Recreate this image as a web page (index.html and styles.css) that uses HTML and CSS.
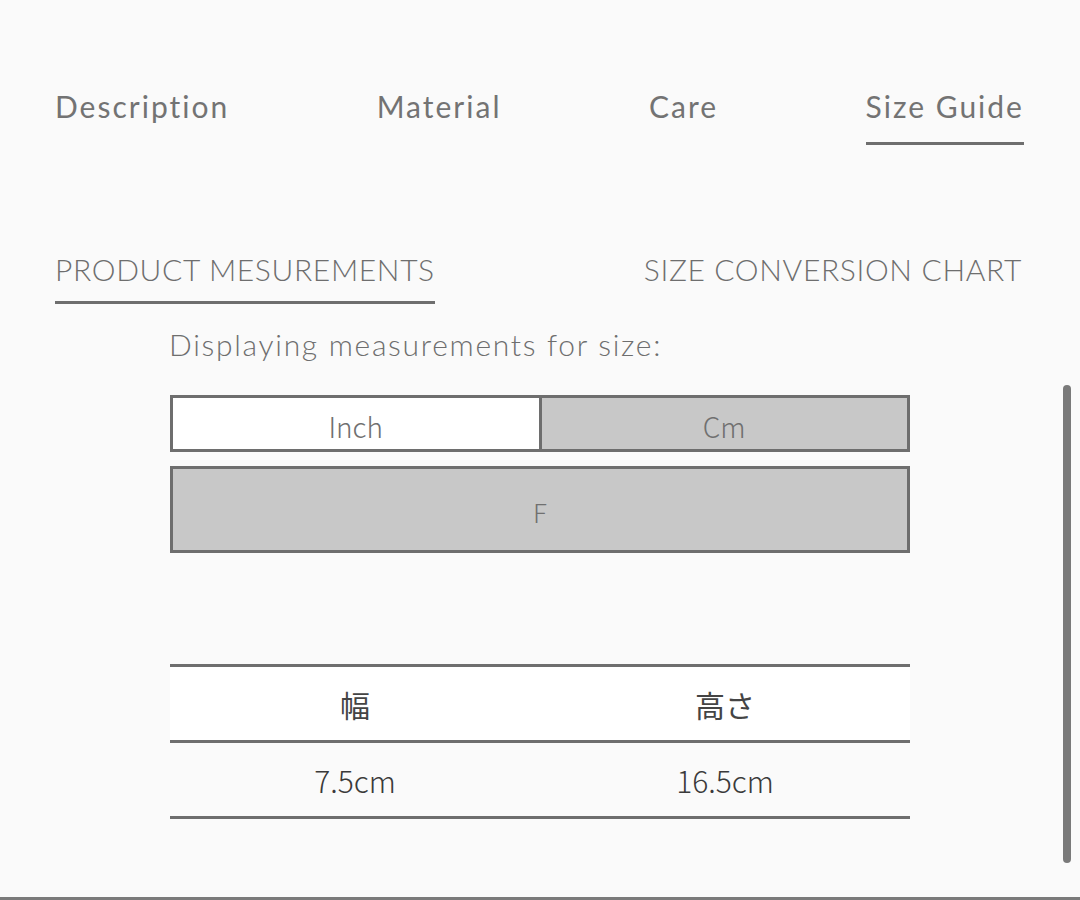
FILE: index.html
```html
<!DOCTYPE html>
<html lang="ja">
<head>
<meta charset="utf-8">
<link rel="stylesheet" href="styles.css">
</head>
<body>
<div class="page">
  <nav class="tabs">
    <div class="tab">Description</div>
    <div class="tab">Material</div>
    <div class="tab">Care</div>
    <div class="tab active">Size Guide</div>
  </nav>
  <div class="subtabs">
    <div class="subtab active">PRODUCT MESUREMENTS</div>
    <div class="subtab">SIZE CONVERSION CHART</div>
  </div>
  <div class="panel">
    <p class="caption">Displaying measurements for size:</p>
    <div class="units">
      <div class="unit selected">Inch</div>
      <div class="unit">Cm</div>
    </div>
    <div class="size">F</div>
    <table class="measure">
      <thead>
        <tr><th>幅</th><th>高さ</th></tr>
      </thead>
      <tbody>
        <tr><td>7.5cm</td><td>16.5cm</td></tr>
      </tbody>
    </table>
  </div>
  <div class="scrollbar"></div>
</div>
</body>
</html>
```
FILE: styles.css
```css
html, body {
  margin: 0;
  padding: 0;
  background: #fafafa;
}
.page {
  position: relative;
  width: 1080px;
  height: 897px;
  border-bottom: 3px solid #7a7a7a;
  color: #6e6e6e;
  font-family: "Lato", "Open Sans", sans-serif;
}
.tabs {
  display: flex;
  justify-content: space-between;
  padding: 84px 56px 0 55px;
}
.tab {
  font-size: 30px;
  line-height: 44px;
  letter-spacing: 2px;
  padding-bottom: 14px;
  border-bottom: 3px solid transparent;
  color: #737373;
}
.tab.active {
  border-bottom-color: #6e6e6e;
}
.subtabs {
  display: flex;
  justify-content: space-between;
  padding: 104px 58px 0 55px;
}
.subtab {
  font-family: "Lato", sans-serif;
  font-weight: 300;
  font-size: 30px;
  line-height: 40px;
  letter-spacing: 0.65px;
  padding-bottom: 12px;
  border-bottom: 3px solid transparent;
}
.subtab.active {
  border-bottom-color: #6e6e6e;
}
.panel {
  width: 740px;
  margin: 0 0 0 170px;
}
.caption {
  margin: 20px 0 0 -1px;
  font-family: "Lato", sans-serif;
  font-weight: 300;
  font-size: 30px;
  line-height: 40px;
  letter-spacing: 1.7px;
}
.units {
  display: flex;
  margin-top: 31px;
  border: 3px solid #6e6e6e;
  height: 51px;
}
.unit {
  flex: 1;
  display: flex;
  align-items: center;
  justify-content: center;
  background: #c8c8c8;
  font-family: "Noto Sans CJK JP", "Noto Sans", sans-serif;
  font-weight: 300;
  font-size: 28px;
  color: #707070;
  padding-top: 4px;
  box-sizing: border-box;
}
.unit.selected {
  background: #ffffff;
  border-right: 3px solid #6e6e6e;
}
.size {
  margin-top: 14px;
  border: 3px solid #6e6e6e;
  background: #c8c8c8;
  display: flex;
  align-items: center;
  justify-content: center;
  font-family: "Noto Sans CJK JP", "Noto Sans", sans-serif;
  font-weight: 300;
  font-size: 26px;
  color: #707070;
  padding-top: 4px;
  box-sizing: border-box;
  height: 87px;
}
.measure {
  width: 100%;
  margin-top: 111px;
  border-collapse: collapse;
  font-family: "Noto Sans CJK JP", "Noto Sans", sans-serif;
  font-size: 30px;
  color: #3a3a3a;
}
.measure th, .measure td {
  width: 50%;
  text-align: center;
  padding: 0;
}
.measure th {
  font-weight: 400;
  color: #444444;
  height: 73px;
}
.measure td {
  font-weight: 300;
  color: #3a3a3a;
  height: 73px;
}
.measure thead tr {
  background: #ffffff;
  border-top: 3px solid #6e6e6e;
  border-bottom: 3px solid #6e6e6e;
}
.measure tbody tr {
  border-bottom: 3px solid #6e6e6e;
}
.scrollbar {
  position: absolute;
  left: 1063px;
  top: 385px;
  width: 8px;
  height: 478px;
  border-radius: 4px;
  background: #7a7a7a;
}
```
